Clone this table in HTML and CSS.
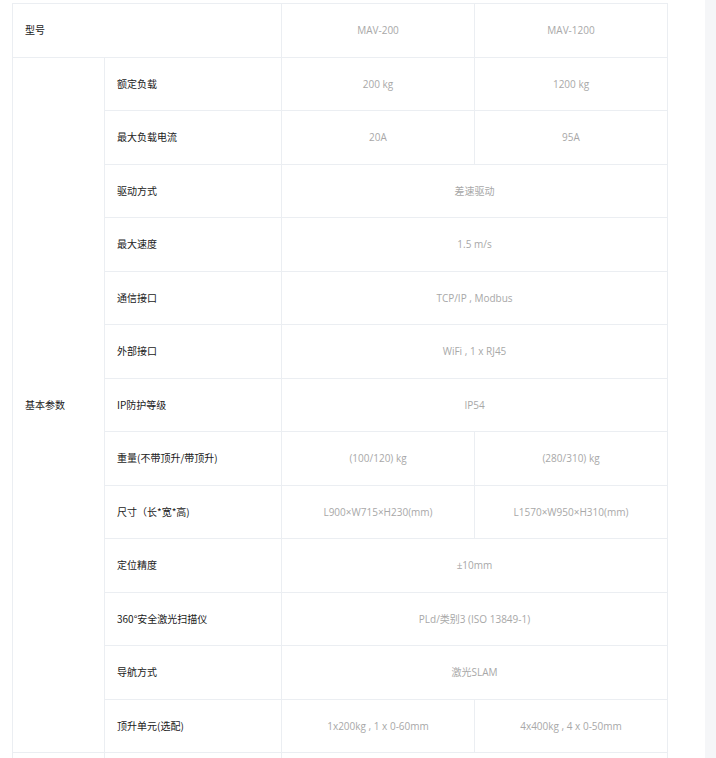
FILE: index.html
```html
<!DOCTYPE html>
<html lang="zh">
<head>
<meta charset="utf-8">
<link rel="stylesheet" href="styles.css">
</head>
<body>
<div class="page">
  <div class="content">
    <table class="spec">
      <colgroup>
        <col class="c1"><col class="c2"><col class="c3"><col class="c4">
      </colgroup>
      <tbody>
        <tr>
          <td class="label" colspan="2">型号</td>
          <td class="val">MAV-200</td>
          <td class="val">MAV-1200</td>
        </tr>
        <tr>
          <td class="label" rowspan="13">基本参数</td>
          <td class="label">额定负载</td>
          <td class="val">200 kg</td>
          <td class="val">1200 kg</td>
        </tr>
        <tr>
          <td class="label">最大负载电流</td>
          <td class="val">20A</td>
          <td class="val">95A</td>
        </tr>
        <tr>
          <td class="label">驱动方式</td>
          <td class="val" colspan="2">差速驱动</td>
        </tr>
        <tr>
          <td class="label">最大速度</td>
          <td class="val" colspan="2">1.5 m/s</td>
        </tr>
        <tr>
          <td class="label">通信接口</td>
          <td class="val" colspan="2">TCP/IP , Modbus</td>
        </tr>
        <tr>
          <td class="label">外部接口</td>
          <td class="val" colspan="2">WiFi , 1 x RJ45</td>
        </tr>
        <tr>
          <td class="label">IP防护等级</td>
          <td class="val" colspan="2">IP54</td>
        </tr>
        <tr>
          <td class="label">重量(不带顶升/带顶升)</td>
          <td class="val">(100/120) kg</td>
          <td class="val">(280/310) kg</td>
        </tr>
        <tr>
          <td class="label">尺寸（长*宽*高)</td>
          <td class="val">L900×W715×H230(mm)</td>
          <td class="val">L1570×W950×H310(mm)</td>
        </tr>
        <tr>
          <td class="label">定位精度</td>
          <td class="val" colspan="2">±10mm</td>
        </tr>
        <tr>
          <td class="label">360°安全激光扫描仪</td>
          <td class="val" colspan="2">PLd/类别3 (ISO 13849-1)</td>
        </tr>
        <tr>
          <td class="label">导航方式</td>
          <td class="val" colspan="2">激光SLAM</td>
        </tr>
        <tr>
          <td class="label">顶升单元(选配)</td>
          <td class="val">1x200kg , 1 x 0-60mm</td>
          <td class="val">4x400kg , 4 x 0-50mm</td>
        </tr>
        <tr>
          <td class="label" rowspan="2">&nbsp;</td>
          <td class="label">&nbsp;</td>
          <td class="val" colspan="2">&nbsp;</td>
        </tr>
      </tbody>
    </table>
  </div>
  <div class="rail"></div>
</div>
</body>
</html>
```

FILE: styles.css
```css
html, body {
  margin: 0;
  padding: 0;
  background: #ffffff;
}

.page {
  display: flex;
  height: 758px;
  overflow: hidden;
}

.content {
  width: 705px;
  padding: 3px 0 0 12px;
  box-sizing: border-box;
}

.rail {
  flex: 1;
  background: #f5f6f8;
}

.spec {
  border-collapse: collapse;
  table-layout: fixed;
  width: 655px;
  font-family: "Open Sans", "Noto Sans CJK SC", sans-serif;
  font-size: 10px;
}

.c1 { width: 92px; }
.c2 { width: 177px; }
.c3 { width: 193px; }
.c4 { width: 193px; }

.spec td {
  border: 1px solid #ebeef2;
  height: 53.5px;
  padding: 0 12px;
  box-sizing: border-box;
  vertical-align: middle;
  line-height: 14px;
}

.label {
  color: #1a1a1a;
  text-align: left;
  font-family: "Noto Sans CJK SC", sans-serif;
  font-weight: 400;
}

.val {
  color: #a8a8a8;
  text-align: center;
}
```
